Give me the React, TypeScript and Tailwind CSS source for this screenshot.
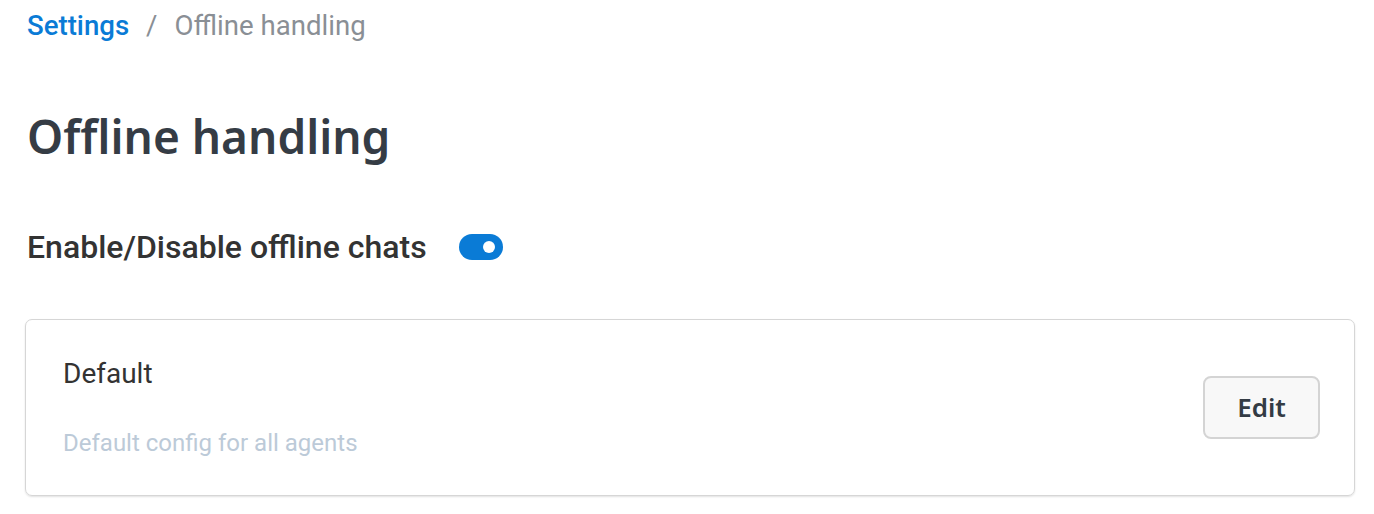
export default function App() {
  return (
    <div className="min-h-screen bg-white font-['Roboto',sans-serif] pl-[27px] pr-[19px]">
      <nav className="flex items-center h-[51px] text-[27.6px] leading-none">
        <span className="text-[#0a7bd6] font-medium">Settings</span>
        <span className="text-[#8a8f95] mx-[17px]">/</span>
        <span className="text-[#8a8f95]">Offline handling</span>
      </nav>

      <h1 className="mt-[62px] text-[46px] leading-none font-semibold text-[#353c45] font-['Noto_Sans',sans-serif]">
        Offline handling
      </h1>

      <div className="mt-[72px] flex items-center gap-[32px]">
        <span className="text-[32px] font-medium text-[#333333] leading-none">Enable/Disable offline chats</span>
        <button className="relative w-[44px] h-[26px] rounded-full bg-[#0a7bd6]">
          <span className="absolute right-[8px] top-[7px] w-[12px] h-[12px] rounded-full bg-white" />
        </button>
      </div>

      <div className="mt-[56px] -ml-[2px] flex items-center justify-between h-[177px] rounded-[7px] border border-[#d6d6d6] shadow-[0_1px_2px_rgba(0,0,0,0.12)] pl-[37px] pr-[34px]">
        <div className="flex flex-col">
          <span className="text-[28px] text-[#333333] leading-none">Default</span>
          <span className="mt-[43px] text-[24px] text-[#bccad8] leading-none">Default config for all agents</span>
        </div>
        <button className="w-[117px] h-[63px] rounded-[8px] border-2 border-[#d4d4d4] bg-[#f8f8f8] text-[26px] font-semibold text-[#333b44] font-['Noto_Sans',sans-serif]">
          Edit
        </button>
      </div>
    </div>
  );
}
